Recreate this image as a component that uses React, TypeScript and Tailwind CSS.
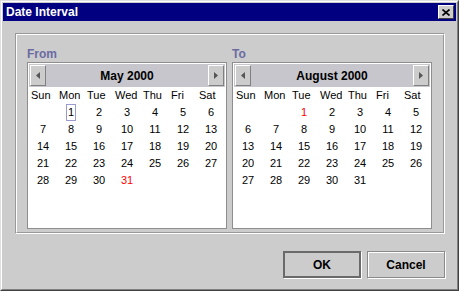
import React from 'react';

type Mark = { selected?: number; red?: number };

const dayNames = ['Sun', 'Mon', 'Tue', 'Wed', 'Thu', 'Fri', 'Sat'];

function buildWeeks(startDay: number, days: number) {
  const cells: (number | null)[] = [];
  for (let i = 0; i < startDay; i++) cells.push(null);
  for (let d = 1; d <= days; d++) cells.push(d);
  while (cells.length % 7 !== 0) cells.push(null);
  return cells;
}

function Arrow({ dir }: { dir: 'left' | 'right' }) {
  return (
    <div className="w-[16px] h-[21px] bg-[#cccccc] border border-t-white border-l-white border-r-[#808080] border-b-[#808080] flex items-center justify-center">
      <svg width="4" height="7" viewBox="0 0 4 7">
        {dir === 'left' ? (
          <polygon points="4,0 4,7 0,3.5" fill="#555555" />
        ) : (
          <polygon points="0,0 0,7 4,3.5" fill="#555555" />
        )}
      </svg>
    </div>
  );
}

function Calendar({ label, title, startDay, days, mark }: { label: string; title: string; startDay: number; days: number; mark: Mark }) {
  const cells = buildWeeks(startDay, days);
  return (
    <div className="flex flex-col">
      <div className="h-[14px] leading-[14px] text-[12px] font-bold text-[#6b6ba3] mb-[1px]">{label}</div>
      <div className="h-[167px] border border-[#8e8e8e] bg-white p-px flex flex-col">
        <div className="h-[23px] bg-[#c6c6cc] flex items-center justify-between px-[1px]">
          <Arrow dir="left" />
          <span className="text-[12px] font-bold text-black">{title}</span>
          <Arrow dir="right" />
        </div>
        <div className="grid grid-cols-[repeat(7,28px)]">
          {dayNames.map((n) => (
            <div key={n} className="h-[17px] leading-[17px] text-[11px] pl-[2px] text-black">{n}</div>
          ))}
          {cells.map((d, i) => (
            <div key={i} className="h-[17px] flex items-center justify-center text-[11px]">
              {d === null ? null : d === mark.selected ? (
                <span className="h-[17px] leading-[15px] px-px border border-[#9a9ad0] text-black">{d}</span>
              ) : (
                <span className={d === mark.red ? 'text-[#ff0000]' : 'text-black'}>{d}</span>
              )}
            </div>
          ))}
        </div>
      </div>
    </div>
  );
}

export default function App() {
  return (
    <div
      className="w-[459px] h-[291px] bg-[#cccccc] border border-t-[#dfdfdf] border-l-[#dfdfdf] border-r-[#404040] border-b-[#404040]"
      style={{ fontFamily: '"Liberation Sans", Arial, sans-serif' }}
    >
      <div className="h-full border border-t-white border-l-white border-r-[#808080] border-b-[#808080] p-px flex flex-col">
        <div className="h-[18px] bg-[#000080] flex items-center justify-between pl-[3px] pr-[2px]">
          <span className="text-[12px] font-bold text-white">Date Interval</span>
          <div className="w-[16px] h-[14px] bg-[#cccccc] border border-t-white border-l-white border-r-[#404040] border-b-[#404040] flex items-center justify-center">
            <svg width="8" height="7" viewBox="0 0 8 7">
              <path d="M0.5 0.5 L7.5 6.5 M7.5 0.5 L0.5 6.5" stroke="#000" strokeWidth="1.6" />
            </svg>
          </div>
        </div>

        <div className="ml-[12px] mr-[11px] mt-[12px] h-[201px] border border-t-[#999999] border-l-[#999999] border-r-white border-b-white">
          <div className="h-full border border-t-white border-l-white border-r-[#999999] border-b-[#999999] pl-[10px] pt-[12px] grid grid-cols-[200px_200px] gap-x-[5px]">
            <Calendar label="From" title="May 2000" startDay={1} days={31} mark={{ selected: 1, red: 31 }} />
            <Calendar label="To" title="August 2000" startDay={2} days={31} mark={{ red: 1 }} />
          </div>
        </div>

        <div className="flex justify-end gap-[6px] mr-[11px] mt-[17px]">
          <button className="w-[78px] h-[27px] border-2 border-[#6a6a6a] shadow-[1px_1px_0_#ffffff] text-[12px] font-bold text-black bg-[#cccccc]">
            OK
          </button>
          <button className="w-[78px] h-[27px] border border-[#8a8a8a] shadow-[inset_1px_1px_0_#ffffff,1px_1px_0_#ffffff] text-[12px] font-bold text-black bg-[#cccccc]">
            Cancel
          </button>
        </div>
      </div>
    </div>
  );
}
